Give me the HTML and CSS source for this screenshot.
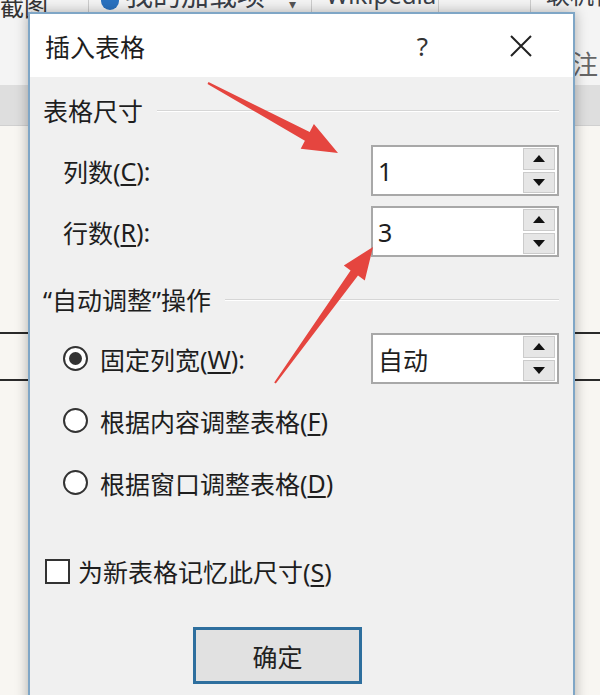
FILE: index.html
```html
<!DOCTYPE html>
<html lang="zh-CN">
<head>
    <meta charset="UTF-8">
    <meta name="viewport" content="width=device-width, initial-scale=1.0">
    <title>插入表格</title>
    <link rel="stylesheet" href="styles.css">
</head>
<body>
    <div class="backdrop">
        <div class="ribbon">
            <div class="rb-col shot"><span>截图</span></div>
            <div class="rb-col addins">
                <span class="addin-icon"></span>
                <span class="cut">我的加载项</span>
                <span class="caret">▾</span>
            </div>
            <div class="rb-col wiki"><span class="cut">Wikipedia</span></div>
            <div class="rb-col blank"></div>
            <div class="rb-col last">
                <span class="cut">联机视频</span>
                <span class="note">批注</span>
            </div>
        </div>
        <div class="ribbon-foot"></div>
        <div class="doc">
            <div class="doc-table"></div>
        </div>
    </div>

    <div class="dialog">
        <div class="titlebar">
            <span class="title">插入表格</span>
            <span class="help">?</span>
            <svg class="close" width="22" height="22" viewBox="0 0 22 22">
                <path d="M1 1 L21 21 M21 1 L1 21" stroke="#222" stroke-width="2" fill="none"/>
            </svg>
        </div>
        <div class="dlg-body">
            <div class="group-head"><span>表格尺寸</span><i class="rule"></i></div>
            <div class="row first">
                <span class="lbl">列数(<u>C</u>):</span>
                <div class="spin">
                    <span class="val">1</span>
                    <div class="spin-btns"><b class="up"></b><b class="down"></b></div>
                </div>
            </div>
            <div class="row second">
                <span class="lbl">行数(<u>R</u>):</span>
                <div class="spin">
                    <span class="val">3</span>
                    <div class="spin-btns"><b class="up"></b><b class="down"></b></div>
                </div>
            </div>

            <div class="group-head auto"><span>“自动调整”操作</span><i class="rule"></i></div>
            <div class="row option first-opt">
                <span class="lbl"><i class="radio checked"></i>固定列宽(<u>W</u>):</span>
                <div class="spin">
                    <span class="val">自动</span>
                    <div class="spin-btns"><b class="up"></b><b class="down"></b></div>
                </div>
            </div>
            <div class="row option">
                <span class="lbl"><i class="radio"></i>根据内容调整表格(<u>F</u>)</span>
            </div>
            <div class="row option">
                <span class="lbl"><i class="radio"></i>根据窗口调整表格(<u>D</u>)</span>
            </div>

            <div class="check-row">
                <i class="checkbox"></i><span>为新表格记忆此尺寸(<u>S</u>)</span>
            </div>
            <div class="btn-row">
                <button class="ok">确定</button>
            </div>
        </div>
    </div>

    <svg class="marks" width="600" height="695" viewBox="0 0 600 695">
        <polygon fill="#e5453f" points="208.5,82.1 309.7,132 313.9,124.1 338,153 300.7,148.7 304.9,140.8 207.5,83.9"/>
        <polygon fill="#e5453f" points="274.2,382.4 350.6,270.4 343.8,265.4 373,247 364.8,280.6 358,275.6 275.8,383.6"/>
    </svg>
</body>
</html>
```

FILE: styles.css
```css
body {
    margin: 0px;
    width: 600px;
    height: 695px;
    overflow: hidden;
    position: relative;
    font-family: "Noto Sans", "Noto Sans CJK SC", sans-serif;
    color: #1e1e1e;
    background-color: #f8f6f2;
}

/* Word window behind the dialog */
.ribbon {
    display: flex;
    height: 85px;
    background-color: #f4f4f4;
    overflow: hidden;
    white-space: nowrap;
}
.rb-col {
    display: flex;
    align-items: flex-start;
    border-right: 1px solid #cdcdcd;
    height: 100%;
}
.shot {
    width: 88px;
    font-size: 24px;
    line-height: 24px;
    color: #333;
}
.shot span {
    margin-top: -5px;
}
.addins {
    width: 222px;
    gap: 6px;
}
.addin-icon {
    width: 18px;
    height: 18px;
    border-radius: 50%;
    background-color: #2a72c0;
    margin: -8px 0px 0px 12px;
}
.cut {
    font-size: 28px;
    line-height: 28px;
    margin-top: -19px;
    color: #3a3f48;
}
.caret {
    font-size: 14px;
    color: #555;
    margin: -6px 0px 0px 18px;
}
.wiki {
    width: 127px;
    padding-left: 14px;
    box-sizing: border-box;
}
.wiki .cut {
    font-size: 24px;
}
.blank {
    width: 91px;
}
.last {
    flex: 1;
    border-right: none;
    flex-direction: column;
    padding-left: 15px;
    overflow: hidden;
}
.last .cut {
    font-size: 24px;
}
.note {
    font-size: 26px;
    line-height: 26px;
    color: #666;
    margin: 42px 0px 0px 0px;
}
.ribbon-foot {
    height: 40px;
    background-color: #dedede;
    border-bottom: 1px solid #d0d0d0;
}
.doc {
    padding-top: 206px;
}
.doc-table {
    height: 45px;
    border-top: 2px solid #2a2a2a;
    border-bottom: 2px solid #2a2a2a;
}

/* dialog window */
.dialog {
    position: absolute;
    top: 12px;
    left: 28px;
    width: 547px;
    height: 700px;
    box-sizing: border-box;
    border: 2px solid #7fa6c6;
    background-color: #f0f0f0;
    box-shadow: 0px 0px 12px rgba(0, 0, 0, 0.3);
}
.titlebar {
    display: flex;
    align-items: center;
    height: 63px;
    background-color: #ffffff;
    padding: 0px 41px 0px 15px;
}
.title {
    font-size: 25px;
    flex: 1;
}
.help {
    font-size: 26px;
    margin-right: 82px;
    color: #333;
}
.dlg-body {
    padding: 16px 14px 0px 13px;
    font-size: 25px;
}
.group-head {
    display: flex;
    align-items: center;
    gap: 14px;
    height: 34px;
}
.group-head.auto {
    margin-top: 25px;
}
.rule {
    flex: 1;
    height: 1px;
    background-color: #d6d6d6;
    box-shadow: 0px 1px 0px #ffffff;
}
.row {
    display: flex;
    align-items: center;
    justify-content: space-between;
    height: 51px;
    padding-left: 20px;
}
.row.first {
    margin-top: 18px;
}
.row.second {
    margin-top: 10px;
}
.row.first-opt {
    margin-top: 17px;
}
.row.option + .row.option {
    margin-top: 11px;
}
.lbl {
    display: flex;
    align-items: center;
}
u {
    text-underline-offset: 3px;
}
.spin {
    display: flex;
    width: 188px;
    height: 51px;
    box-sizing: border-box;
    border: 2px solid #a8a8a8;
    background-color: #ffffff;
}
.val {
    flex: 1;
    display: flex;
    align-items: center;
    padding-left: 5px;
}
.spin-btns {
    display: flex;
    flex-direction: column;
    gap: 2px;
    width: 32px;
    padding: 1px 2px 1px 0px;
}
.spin-btns b {
    flex: 1;
    display: flex;
    align-items: center;
    justify-content: center;
    background-color: #e6e6e6;
    border: 1px solid #cbcbcb;
}
.spin-btns b::after {
    content: "";
    width: 0px;
    height: 0px;
    border-left: 6px solid transparent;
    border-right: 6px solid transparent;
}
.spin-btns .up::after {
    border-bottom: 7px solid #111;
}
.spin-btns .down::after {
    border-top: 7px solid #111;
}
.radio {
    display: flex;
    align-items: center;
    justify-content: center;
    width: 25px;
    height: 25px;
    box-sizing: border-box;
    border: 2px solid #333;
    border-radius: 50%;
    background-color: #ffffff;
    margin-right: 12px;
}
.radio.checked::after {
    content: "";
    width: 13px;
    height: 13px;
    border-radius: 50%;
    background-color: #333;
}
.check-row {
    display: flex;
    align-items: center;
    height: 50px;
    margin-top: 38px;
    padding-left: 2px;
}
.checkbox {
    width: 25px;
    height: 25px;
    box-sizing: border-box;
    border: 2px solid #333;
    background-color: #ffffff;
    margin-right: 8px;
}
.btn-row {
    margin-top: 31px;
    padding-left: 150px;
}
.ok {
    width: 169px;
    height: 57px;
    border: 3px solid #2e6f9e;
    background-color: #e1e1e1;
    font-family: "Noto Sans", "Noto Sans CJK SC", sans-serif;
    font-size: 25px;
    color: #222;
}

/* red annotation arrows */
.marks {
    position: absolute;
    top: 0px;
    left: 0px;
    pointer-events: none;
}
```
